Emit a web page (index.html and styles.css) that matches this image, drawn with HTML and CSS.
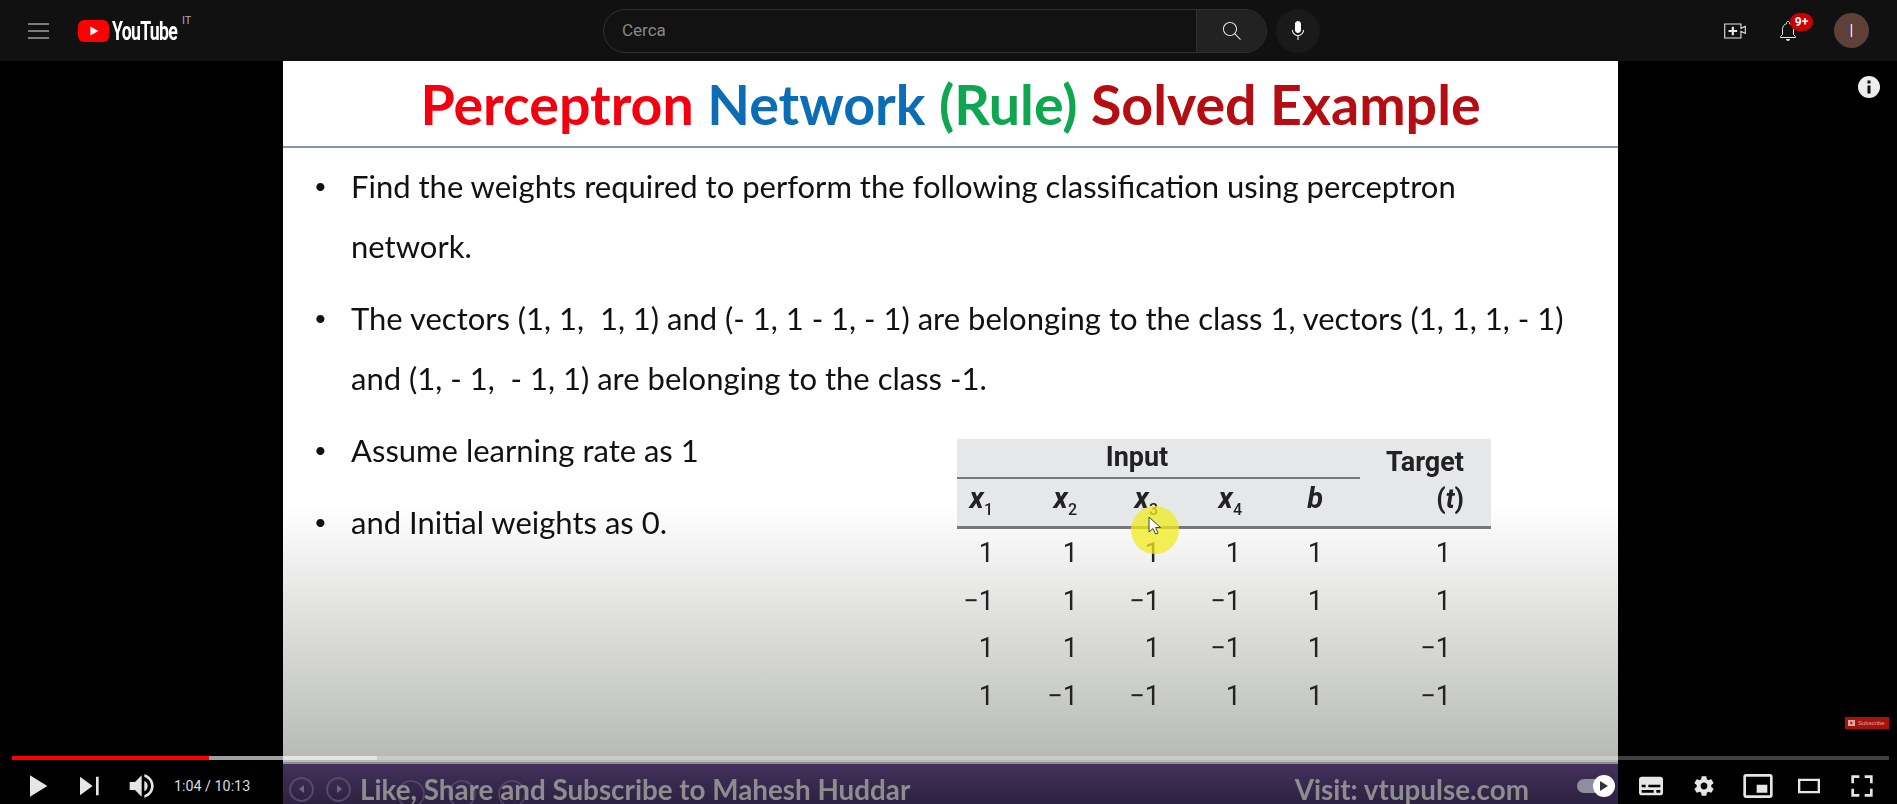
FILE: index.html
```html
<!doctype html>
<html lang="it">
<head>
  <meta charset="UTF-8">
  <title>Perceptron Network (Rule) Solved Example - YouTube</title>
  <link rel="stylesheet" href="styles.css">
</head>
<body>
  <!-- top bar -->
  <header class="masthead">
    <div class="mast-left">
      <svg class="burger" width="22" height="16" viewBox="0 0 22 16"><path d="M0 1h21M0 8h21M0 15h21" stroke="#e8e8e8" stroke-width="1"/></svg>
      <a class="logo">
        <svg width="31" height="22" viewBox="0 0 31 22"><rect width="31" height="22" rx="6" fill="#f00"/><path d="M12.4 6.4 20.4 11l-8 4.6z" fill="#fff"/></svg>
        <span class="logo-box"><span class="logo-word">YouTube</span></span>
        <sup class="logo-country">IT</sup>
      </a>
    </div>
    <div class="mast-center">
      <div class="search">
        <div class="search-input">Cerca</div>
        <div class="search-btn">
          <svg width="24" height="24" viewBox="0 0 24 24"><path fill="#e8e8e8" d="M20.87 20.17l-5.59-5.59C16.35 13.35 17 11.75 17 10c0-3.87-3.13-7-7-7s-7 3.13-7 7 3.13 7 7 7c1.75 0 3.35-.65 4.58-1.71l5.59 5.59.7-.71zM10 16c-3.31 0-6-2.69-6-6s2.69-6 6-6 6 2.69 6 6-2.69 6-6 6z"/></svg>
        </div>
      </div>
      <div class="mic">
        <svg width="24" height="24" viewBox="0 0 24 24"><path fill="#fff" d="M12 14c1.66 0 3-1.34 3-3V5c0-1.66-1.34-3-3-3S9 3.34 9 5v6c0 1.66 1.34 3 3 3zm5-3c0 2.76-2.24 5-5 5s-5-2.24-5-5H6c0 3.2 2.5 5.7 5.5 6v4h1v-4c3-.3 5.5-2.8 5.5-6h-1z"/></svg>
      </div>
    </div>
    <div class="mast-right">
      <svg class="mast-icon" width="26" height="26" viewBox="0 0 24 24"><path fill="#e8e8e8" d="M14 13h-3v3H9v-3H6v-2h3V8h2v3h3v2zm3-7H3v12h14v-6.39l4 1.83V8.56l-4 1.83V6m1-1v3.83L22 7v8l-4-1.83V19H2V5h16z"/></svg>
      <div class="bell">
        <svg width="24" height="24" viewBox="0 0 24 24"><path fill="none" stroke="#e8e8e8" d="M4.5 18.5v-1l2-1.9v-5.3c0-2.9 1.6-5 4-5.6V3.9c0-.8.7-1.4 1.5-1.4s1.500.6 1.500 1.400v.8c2.400.6 4 2.700 4 5.600v5.300l2 1.900v1z"/><path fill="#e8e8e8" d="M10 20h4c0 1.100-.9 2-2 2s-2-.9-2-2z"/></svg>
        <span class="badge">9+</span>
      </div>
      <div class="avatar">I</div>
    </div>
  </header>

  <!-- player -->
  <main class="player">
    <section class="slide">
      <h1 class="slide-title">
        <span class="c-red">Perceptron</span>
        <span class="c-blue">Network</span>
        <span class="c-green">(Rule)</span>
        <span class="c-dark">Solved Example</span>
      </h1>
      <ul class="points">
        <li class="point"><span class="dot">•</span><span>Find the weights required to perform the following classification using perceptron network.</span></li>
        <li class="point"><span class="dot">•</span><span>The vectors (1, 1,&nbsp; 1, 1) and (- 1, 1 - 1, - 1) are belonging to the class 1, vectors (1, 1, 1, - 1) and (1, - 1,&nbsp; - 1, 1) are belonging to the class -1.</span></li>
      </ul>
      <div class="lower">
        <ul class="points points-short">
          <li class="point"><span class="dot">•</span><span>Assume learning rate as 1</span></li>
          <li class="point"><span class="dot">•</span><span>and Initial weights as 0.</span></li>
        </ul>
        <div class="tbl">
          <div class="tbl-head">
            <div class="head-input">
              <div class="input-title">Input</div>
              <div class="head-vars">
                <span><i>x</i><sub>1</sub></span>
                <span><i>x</i><sub>2</sub></span>
                <span><i>x</i><sub>3</sub></span>
                <span><i>x</i><sub>4</sub></span>
                <span><i>b</i></span>
              </div>
            </div>
            <div class="head-target">
              <div>Target</div>
              <div>(<i>t</i>)</div>
            </div>
          </div>
          <div class="tbl-row"><span>1</span><span>1</span><span>1</span><span>1</span><span>1</span><span>1</span></div>
          <div class="tbl-row"><span>−1</span><span>1</span><span>−1</span><span>−1</span><span>1</span><span>1</span></div>
          <div class="tbl-row"><span>1</span><span>1</span><span>1</span><span>−1</span><span>1</span><span>−1</span></div>
          <div class="tbl-row"><span>1</span><span>−1</span><span>−1</span><span>1</span><span>1</span><span>−1</span></div>
          <div class="pointer">
            <svg width="14" height="20" viewBox="0 0 14 20"><path d="M1 1v15l4-3.500 2.500 5.500 2.500-1-2.500-5.500h5z" fill="#fff" stroke="#444"/></svg>
          </div>
        </div>
      </div>
      <div class="slide-foot">
        <div class="nav-circle"><svg width="10" height="10" viewBox="0 0 10 10"><path d="M7 1 2 5l5 4z" fill="#6e6680"/></svg></div>
        <div class="nav-circle"><svg width="10" height="10" viewBox="0 0 10 10"><path d="M3 1l5 4-5 4z" fill="#6e6680"/></svg></div>
        <span class="foot-like">Like, Share and Subscribe to Mahesh Huddar</span>
        <span class="foot-visit">Visit: vtupulse.com</span>
        <svg class="foot-ghost" width="150" height="30" viewBox="0 0 150 30"><g fill="none" stroke="#6b6080" stroke-width="1.500"><circle cx="16" cy="16" r="13"/><circle cx="67" cy="16" r="13"/><circle cx="117" cy="16" r="13"/></g></svg>
      </div>
    </section>

    <div class="info-card">
      <svg width="22" height="22" viewBox="0 0 22 22"><circle cx="11" cy="11" r="11" fill="#eee"/><path d="M9.500 9.500h3v8h-3zM9.500 4.500h3v3h-3z" fill="#111"/></svg>
    </div>
    <div class="sub-badge">
      <svg width="7" height="6" viewBox="0 0 7 6"><rect width="7" height="6" fill="#d8a8a4"/><path d="M2.500 1.300 5 3 2.500 4.700z" fill="#a81208"/></svg>
      <span>Subscribe</span>
    </div>

    <div class="controls">
      <div class="progress">
        <div class="prog-played"></div>
        <div class="prog-loaded"></div>
      </div>
      <div class="ctl-row">
        <div class="ctl-left">
          <svg class="ctl ctl-play" viewBox="0 0 36 36"><path d="M12 26l13-8-13-8z"/></svg>
          <svg class="ctl ctl-next" viewBox="0 0 36 36"><path d="M12 25l9.500-7L12 11v14zM26 11v14h-2V11h2z"/></svg>
          <svg class="ctl ctl-vol" viewBox="0 0 36 36"><path d="M8 21h4l5 5V10l-5 5H8v6zM19 14v8c1.480-.68 2.500-2.230 2.500-4 0-1.740-1.020-3.260-2.500-4zM19 11.290c2.890.86 5 3.540 5 6.710s-2.110 5.850-5 6.710v2.060c4.010-.91 7-4.490 7-8.770s-2.990-7.860-7-8.770v2.060z"/></svg>
          <span class="time">1:04 / 10:13</span>
        </div>
        <div class="ctl-right">
          <div class="autoplay">
            <div class="auto-track"></div>
            <div class="auto-knob"><svg width="10" height="12" viewBox="0 0 10 12"><path d="M1 1l8 5-8 5z" fill="#333"/></svg></div>
          </div>
          <svg class="ctl ctl-cc" viewBox="0 0 36 36"><path fill-rule="evenodd" d="M11 11c-1.110 0-2 .9-2 2v10c0 1.100.89 2 2 2h14c1.100 0 2-.9 2-2V13c0-1.100-.9-2-2-2H11zM11 17h3v2h-3v-2zM20 23h-9v-2h9v2zM25 23h-3v-2h3v2zM25 19h-9v-2h9v2z"/></svg>
          <svg class="ctl ctl-gear" viewBox="0 0 36 36"><path d="m23.940 18.780c.03-.25.05-.51.05-.78 0-.27-.02-.52-.05-.78l1.680-1.320c.15-.12.19-.33.09-.51l-1.600-2.760c-.09-.17-.31-.24-.48-.17l-1.990.8c-.41-.32-.86-.58-1.350-.78l-.30-2.120c-.02-.19-.19-.33-.39-.33h-3.200c-.2 0-.36.14-.39.33l-.30 2.120c-.48.2-.93.47-1.350.78l-1.990-.8c-.18-.07-.39 0-.48.17l-1.600 2.760c-.10.17-.05.39.09.51l1.680 1.320c-.03.25-.05.52-.05.78 0 .26.02.52.05.78l-1.680 1.320c-.15.12-.19.33-.09.51l1.600 2.760c.09.17.31.24.48.17l1.990-.8c.41.32.86.58 1.350.78l.30 2.120c.02.19.19.33.39.33h3.200c.2 0 .36-.14.39-.33l.30-2.120c.48-.2.93-.47 1.350-.78l1.990.8c.18.07.39 0 .48-.17l1.600-2.760c.09-.17.05-.39-.09-.51l-1.680-1.320zm-5.940 2.010c-1.540 0-2.800-1.250-2.800-2.800 0-1.540 1.250-2.800 2.800-2.800 1.540 0 2.800 1.250 2.800 2.800 0 1.540-1.250 2.800-2.800 2.800z"/></svg>
          <svg class="ctl ctl-mini" viewBox="0 0 36 36"><path fill-rule="evenodd" d="M25 17h-8v6h8v-6zM29 25V10.980C29 9.880 28.100 9 27 9H9c-1.100 0-2 .88-2 1.980V25c0 1.100.9 2 2 2h18c1.100 0 2-.9 2-2zM27 25.020H9V10.970h18v14.050z"/></svg>
          <svg class="ctl ctl-theater" viewBox="0 0 36 36"><path fill-rule="evenodd" d="M9.750 12.500h16.500v11H9.750zM11.500 14.250v7.500h13v-7.500z"/></svg>
          <svg class="ctl ctl-full" viewBox="0 0 36 36"><path d="M10 16h2v-4h4v-2h-6v6zM20 10v2h4v4h2v-6h-6zM24 24h-4v2h6v-6h-2v4zM12 20h-2v6h6v-2h-4v-4z"/></svg>
        </div>
      </div>
    </div>
  </main>
</body>
</html>
```

FILE: styles.css
```css
html,body{margin:0;padding:0;height:804px;overflow:hidden;background:#000;}
body{font-family:Roboto,"Liberation Sans",sans-serif;color:#fff;}
ul{list-style:none;margin:0;padding:0;}

/* top bar */
.masthead{height:61px;background:#111;display:flex;align-items:center;position:relative;}
.mast-left{display:flex;align-items:center;padding-left:28px;width:575px;box-sizing:border-box;}
.burger{display:block;}
.logo{display:flex;align-items:center;margin-left:28px;position:relative;}
.logo-box{display:block;width:66px;margin-left:3px;height:26px;overflow:visible;}
.logo-word{display:block;font-size:26px;line-height:26px;font-weight:700;letter-spacing:-1px;color:#fff;transform:scaleX(.68);transform-origin:left center;white-space:nowrap;}
.logo-country{font-size:11px;line-height:11px;color:#aaa;align-self:flex-start;margin:-3px 0 0 4px;vertical-align:baseline;}
.mast-center{display:flex;align-items:center;margin-left:28px;}
.search{width:664px;height:44px;display:flex;box-sizing:border-box;border:1px solid #303030;border-radius:22px;overflow:hidden;background:#121212;}
.search-input{flex:1;line-height:41px;padding-left:18px;font-size:17px;color:#888;}
.search-btn{width:69px;background:#222;border-left:1px solid #303030;display:flex;align-items:center;justify-content:center;}
.mic{width:44px;height:44px;border-radius:50%;background:#1a1a1a;margin-left:9px;display:flex;align-items:center;justify-content:center;}
.mast-right{margin-left:auto;display:flex;align-items:center;padding-right:28px;}
.mast-icon{display:block;}
.bell{position:relative;margin-left:28px;height:24px;}
.bell svg{display:block;}
.badge{position:absolute;left:14px;top:-6px;width:23px;height:18px;border-radius:9px;background:#c00;color:#fff;font-size:12px;font-weight:700;line-height:18px;text-align:center;}
.avatar{width:35px;height:35px;border-radius:50%;background:#5d4037;margin-left:34px;text-align:center;line-height:35px;font-size:18px;color:#fff;font-weight:300;}

/* player */
.player{height:743px;background:#000;position:relative;overflow:hidden;}
.slide{width:1335px;height:743px;margin-left:283px;display:flex;flex-direction:column;color:#111;background:linear-gradient(#fff 444px,#c8cac6 640px,#b8bab6 695px);}
.slide-title{margin:0;height:85px;border-bottom:2px solid #7f95b5;text-align:center;font-family:Lato,"Noto Sans",sans-serif;font-size:55.500px;line-height:86px;font-weight:700;filter:blur(.4px);}
.c-red{color:#f2000f;}
.c-blue{color:#0a6db5;}
.c-green{color:#0fa651;}
.c-dark{color:#b50d12;}
.points{padding:8px 46px 0 31px;font-family:Lato,"Noto Sans",sans-serif;font-size:31px;line-height:60px;filter:blur(.3px);}
.point{display:flex;margin-bottom:12px;}
.dot{flex:none;width:37px;font-size:22px;}
.lower{display:flex;flex:1;min-height:0;}
.points-short{width:674px;box-sizing:border-box;padding-top:0;padding-right:0;}
.tbl{width:534px;margin-top:18.500px;position:relative;font-family:Roboto,"Liberation Sans",sans-serif;filter:blur(.3px);color:#222;}
.tbl::after{content:"";position:absolute;left:174px;top:67px;width:48px;height:48px;border-radius:50%;background:rgba(240,235,30,.75);}
.tbl-head{display:flex;background:#e6e7e9;border-bottom:3px solid #777;height:87px;margin-bottom:1.500px;}
.head-input{width:403px;}
.input-title{height:38px;border-bottom:2px solid #777;text-align:center;padding-right:43px;font-weight:700;font-size:27px;line-height:36px;}
.head-vars{display:grid;grid-template-columns:36px 84px 81px 84px 81px;text-align:right;font-weight:700;font-size:29px;line-height:39px;}
.head-vars sub{font-size:16px;font-weight:500;line-height:0;}
.head-target{flex:1;text-align:right;padding-right:27px;font-weight:700;font-size:27px;line-height:37px;padding-top:5px;}
.tbl-row{display:grid;grid-template-columns:37px 84px 82px 81px 82px 128px;text-align:right;height:47.500px;line-height:47px;font-size:27px;}
.pointer{position:absolute;left:191px;top:77px;z-index:2;}
.pointer svg{display:block;}
.slide-foot{height:42px;flex:none;margin-top:auto;box-sizing:border-box;border-top:2px solid #8e8f8c;background:linear-gradient(#43315c,#2c2240);display:flex;align-items:center;padding:10px 89px 0 6px;filter:blur(.5px);font-family:Lato,"Noto Sans",sans-serif;font-size:27.800px;font-weight:700;color:#8d8d90;position:relative;}
.nav-circle{width:25px;height:25px;box-sizing:border-box;border:2px solid #54496a;border-radius:50%;margin-right:12px;display:flex;align-items:center;justify-content:center;}
.nav-circle svg{display:block;}
.foot-like{margin-left:-3px;position:relative;z-index:1;}
.foot-visit{margin-left:auto;}
.foot-ghost{position:absolute;left:112px;top:14px;opacity:.6;}

.info-card{position:absolute;left:1858px;top:15px;width:22px;height:22px;}
.info-card svg{display:block;}
.sub-badge{position:absolute;left:1845px;top:656px;width:44px;height:12px;background:#a81208;display:flex;align-items:center;gap:3px;padding-left:3px;box-sizing:border-box;color:#d8a8a4;font-size:6px;font-family:"Liberation Sans",sans-serif;}

/* bottom controls */
.controls{position:absolute;left:0;right:0;bottom:0;}
.progress{height:4px;margin-left:12px;width:1877px;background:rgba(255,255,255,.25);position:relative;}
.prog-loaded{position:absolute;left:0;top:0;bottom:0;width:365px;background:rgba(255,255,255,.5);}
.prog-played{position:absolute;left:0;top:0;bottom:0;width:197px;background:#f00;z-index:1;}
.ctl-row{height:36px;margin-top:8px;display:flex;align-items:center;justify-content:space-between;padding:0 11px 0 14px;}
.ctl-left,.ctl-right{display:flex;align-items:center;height:36px;}
.ctl{width:48px;height:48px;flex:none;fill:#e6e6e6;display:block;}
.ctl-next{margin-left:2px;}
.ctl-vol{margin-left:7px;}
.time{font-size:14.300px;color:#ddd;margin-left:7px;white-space:nowrap;}
.autoplay{width:38px;height:22px;position:relative;}
.auto-track{position:absolute;left:0;top:4px;width:30px;height:14px;border-radius:7px;background:#8e8ea0;}
.auto-knob{position:absolute;left:16px;top:0;width:22px;height:22px;border-radius:50%;background:#fff;display:flex;align-items:center;justify-content:center;}
.ctl-cc{margin-left:12px;}
.ctl-gear{width:44px;height:44px;margin-left:7px;}
.ctl-mini{margin-left:8px;}
.ctl-theater{margin-left:3px;}
.ctl-full{margin-left:5px;}
```
